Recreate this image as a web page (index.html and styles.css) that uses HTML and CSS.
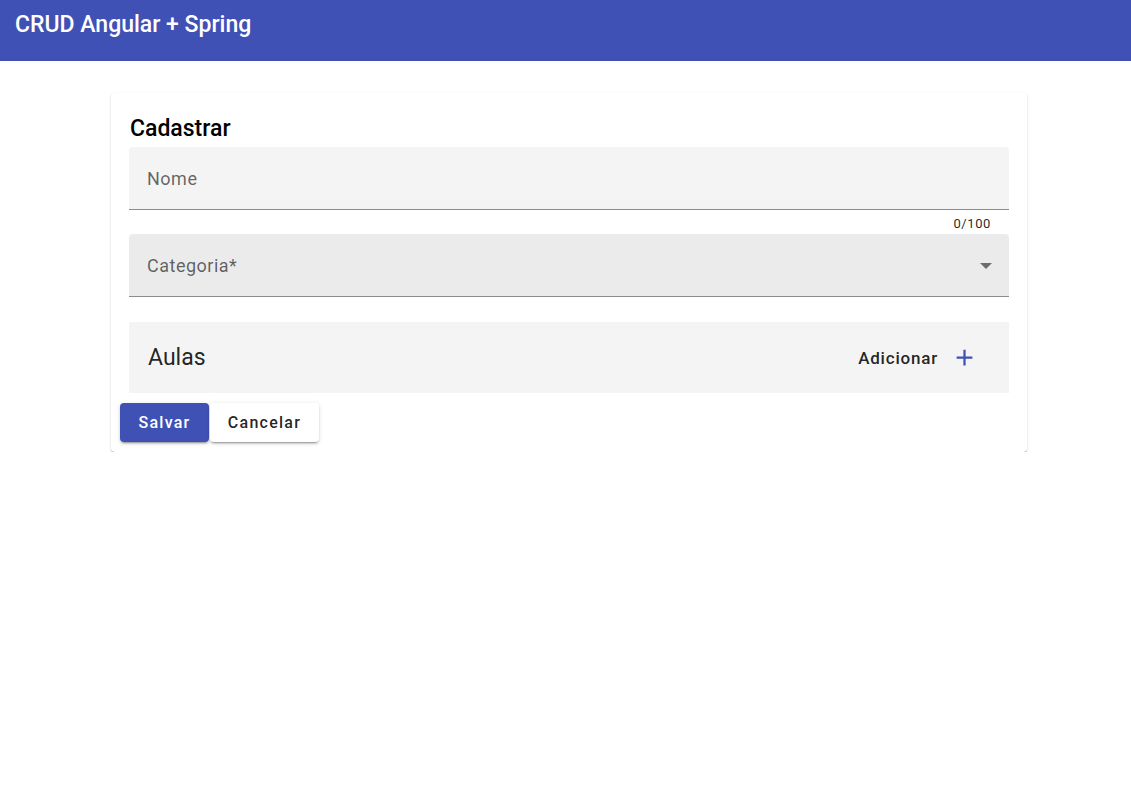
FILE: index.html
```html
<!DOCTYPE html>
<html lang="pt">
<head>
<meta charset="utf-8">
<title>CRUD Angular + Spring</title>
<link rel="stylesheet" href="styles.css">
</head>
<body>
<header class="toolbar">
  <span class="app-title">CRUD Angular + Spring</span>
</header>
<main class="page">
  <section class="card">
    <h2 class="card-title">Cadastrar</h2>
    <form class="form">
      <div class="field">
        <span class="field-label">Nome</span>
      </div>
      <div class="hint-row"><span class="hint">0/100</span></div>
      <div class="field field-select">
        <span class="field-label">Categoria*</span>
        <span class="select-arrow"></span>
      </div>
      <div class="lessons-bar">
        <span class="lessons-title">Aulas</span>
        <button type="button" class="add-btn">
          <span>Adicionar</span>
          <svg class="add-icon" viewBox="0 0 24 24" width="27" height="27"><path d="M19 13h-6v6h-2v-6H5v-2h6V5h2v6h6v2z"/></svg>
        </button>
      </div>
      <div class="actions">
        <button type="button" class="btn btn-primary">Salvar</button>
        <button type="button" class="btn btn-default">Cancelar</button>
      </div>
    </form>
  </section>
</main>
</body>
</html>
```

FILE: styles.css
```css
* { box-sizing: border-box; }

html, body {
  margin: 0;
  padding: 0;
  background: #ffffff;
  font-family: Roboto, "Helvetica Neue", "Liberation Sans", sans-serif;
  color: rgba(0, 0, 0, 0.87);
}

.toolbar {
  height: 61px;
  background: #3f51b5;
  color: #ffffff;
  padding: 1px 15px 0 15px;
  display: flex;
  align-items: flex-start;
}

.app-title {
  font-size: 23px;
  font-weight: 500;
  line-height: 48px;
}

.page {
  padding: 32px 104px 0 111px;
}

.card {
  background: #ffffff;
  border-radius: 4px;
  box-shadow: 0 2px 1px -1px rgba(0,0,0,.25), 0 1px 1px 0 rgba(0,0,0,.16), 0 1px 3px 0 rgba(0,0,0,.12);
  padding: 20px 18px 10px 18px;
}

.card-title {
  margin: 0 0 2px 1px;
  font-size: 23px;
  font-weight: 500;
  line-height: 32px;
  color: #000000;
}

.form {
  display: flex;
  flex-direction: column;
}

.field {
  height: 63px;
  background: #f4f4f4;
  border-radius: 4px 4px 0 0;
  border-bottom: 1px solid #8c8c8c;
  padding: 0 16px 0 18px;
  display: flex;
  align-items: center;
  justify-content: space-between;
}

.field-select {
  background: #ebebeb;
}

.field-label {
  font-size: 18px;
  letter-spacing: 0.5px;
  color: rgba(0, 0, 0, 0.6);
}

.select-arrow {
  width: 0;
  height: 0;
  border-left: 6px solid transparent;
  border-right: 6px solid transparent;
  border-top: 6px solid rgba(0, 0, 0, 0.54);
  margin-right: 1px;
  margin-top: 2px;
}

.hint-row {
  height: 24px;
  display: flex;
  justify-content: flex-end;
  align-items: center;
  padding: 2px 18px 0 0;
}

.hint {
  font-size: 13px;
  letter-spacing: 0.6px;
  color: rgba(0, 0, 0, 0.87);
}

.lessons-bar {
  margin-top: 25px;
  height: 71px;
  background: #f4f4f4;
  display: flex;
  align-items: center;
  justify-content: space-between;
  padding: 0 31px 0 19px;
}

.lessons-title {
  font-size: 23px;
  font-weight: 400;
  color: rgba(0, 0, 0, 0.87);
}

.add-btn {
  background: transparent;
  border: 0;
  padding: 0;
  font-family: inherit;
  font-size: 17px;
  font-weight: 500;
  letter-spacing: 0.8px;
  color: rgba(0, 0, 0, 0.87);
  display: flex;
  align-items: center;
  gap: 13px;
}

.add-icon {
  fill: #3f51b5;
}

.actions {
  margin: 10px 0 0 -9px;
  display: flex;
  gap: 1px;
}

.btn {
  height: 39px;
  border: 0;
  border-radius: 4px;
  font-family: inherit;
  font-size: 16px;
  font-weight: 500;
  letter-spacing: 1.25px;
  padding: 0;
  box-shadow: 0 3px 1px -2px rgba(0,0,0,.2), 0 2px 2px 0 rgba(0,0,0,.14), 0 1px 5px 0 rgba(0,0,0,.12);
}

.btn-primary {
  background: #3f51b5;
  color: #ffffff;
  width: 89px;
}

.btn-default {
  background: #ffffff;
  color: rgba(0, 0, 0, 0.87);
  width: 109px;
}
```
